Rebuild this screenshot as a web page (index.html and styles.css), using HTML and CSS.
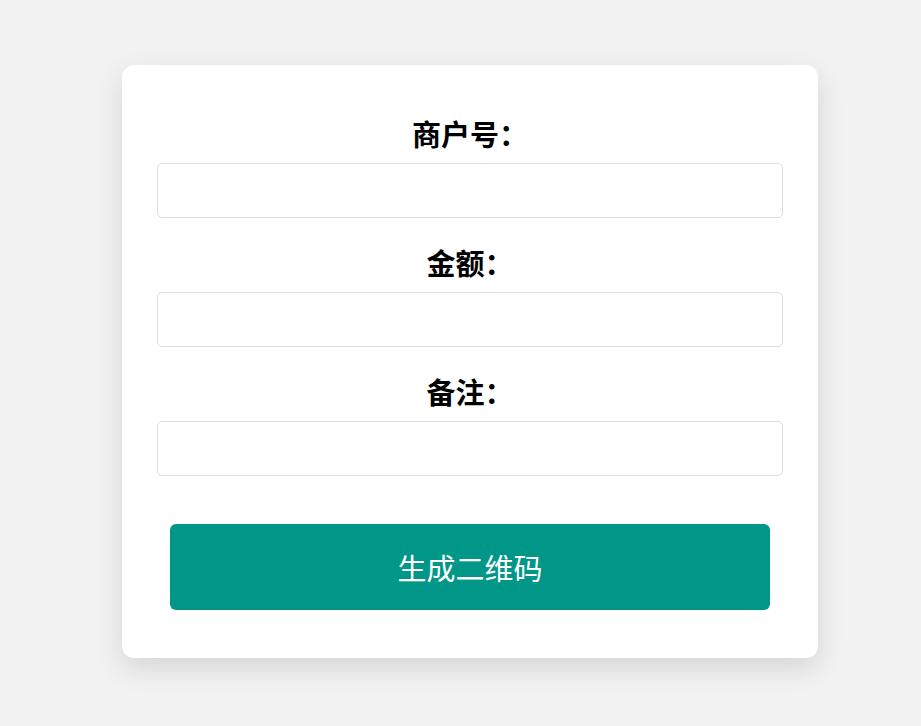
FILE: index.html
```html
<!DOCTYPE html>
<html lang="zh-CN">
<head>
  <meta charset="UTF-8">
  <meta name="viewport" content="width=device-width, initial-scale=1.0">
  <title>生成二维码</title>
  <link rel="stylesheet" href="styles.css">
</head>
<body>

<div class="card">
  <form class="qr-form" onsubmit="return false;">
    <div class="field">
      <label for="merchant">商户号：</label>
      <input type="text" id="merchant">
    </div>
    <div class="field">
      <label for="amount">金额：</label>
      <input type="text" id="amount">
    </div>
    <div class="field">
      <label for="remark">备注：</label>
      <input type="text" id="remark">
    </div>
    <button class="btn" type="submit">生成二维码</button>
  </form>
</div>

</body>
</html>
```

FILE: styles.css
```css
html {
  background-color: #f2f2f2;
}
body {
  font-family: "Noto Sans CJK SC", "Noto Sans", sans-serif;
  margin: 0;
  padding: 65px 0 68px;
  min-height: 100vh;
  box-sizing: border-box;
  background-color: #f2f2f2;
}
.card {
  width: 696px;
  box-sizing: border-box;
  margin-left: 122px;
  padding: 48px 35px;
  background-color: #fff;
  border-radius: 12px;
  box-shadow: 0 10px 28px rgba(0, 0, 0, 0.12);
}
.field {
  margin-bottom: 24px;
}
.field label {
  display: block;
  text-align: center;
  font-size: 29px;
  line-height: 40px;
  font-weight: bold;
  color: #000;
  margin-bottom: 10px;
}
.field input {
  display: block;
  width: 100%;
  height: 55px;
  box-sizing: border-box;
  border: 1px solid #ddd;
  border-radius: 5px;
  padding: 0 12px;
  font-size: 18px;
  outline: none;
}
.btn {
  display: block;
  width: 600px;
  height: 86px;
  margin: 48px auto 0;
  background-color: #009688;
  color: #fff;
  border: none;
  border-radius: 6px;
  font-family: inherit;
  font-size: 29px;
  cursor: pointer;
}
```
